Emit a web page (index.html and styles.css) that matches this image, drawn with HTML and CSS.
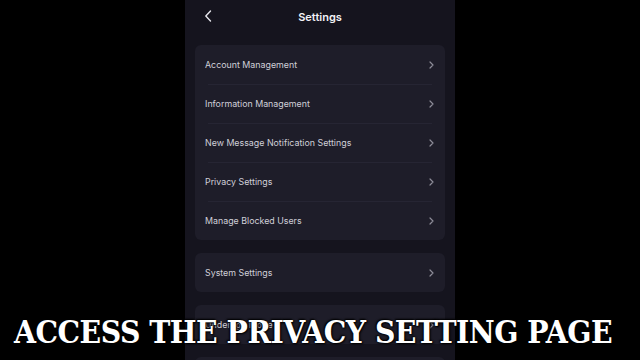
FILE: index.html
```html
<!DOCTYPE html>
<html>
<head>
<meta charset="utf-8">
<link rel="stylesheet" href="styles.css">
</head>
<body>
<div class="stage">
  <div class="phone">
    <div class="header">
      <svg class="back" width="8" height="12" viewBox="0 0 8 12"><path d="M6.5 1 L1.8 6 L6.5 11" fill="none" stroke="#e6e6ec" stroke-width="1.4" stroke-linecap="round" stroke-linejoin="round"/></svg>
      <div class="title">Settings</div>
    </div>
    <div class="card">
      <div class="row"><span>Account Management</span><svg class="chev" width="5" height="8" viewBox="0 0 5 8"><path d="M1 1 L4 4 L1 7" fill="none" stroke="#8d8c98" stroke-width="1.2" stroke-linecap="round" stroke-linejoin="round"/></svg></div>
      <div class="row"><span>Information Management</span><svg class="chev" width="5" height="8" viewBox="0 0 5 8"><path d="M1 1 L4 4 L1 7" fill="none" stroke="#8d8c98" stroke-width="1.2" stroke-linecap="round" stroke-linejoin="round"/></svg></div>
      <div class="row"><span>New Message Notification Settings</span><svg class="chev" width="5" height="8" viewBox="0 0 5 8"><path d="M1 1 L4 4 L1 7" fill="none" stroke="#8d8c98" stroke-width="1.2" stroke-linecap="round" stroke-linejoin="round"/></svg></div>
      <div class="row"><span>Privacy Settings</span><svg class="chev" width="5" height="8" viewBox="0 0 5 8"><path d="M1 1 L4 4 L1 7" fill="none" stroke="#8d8c98" stroke-width="1.2" stroke-linecap="round" stroke-linejoin="round"/></svg></div>
      <div class="row"><span>Manage Blocked Users</span><svg class="chev" width="5" height="8" viewBox="0 0 5 8"><path d="M1 1 L4 4 L1 7" fill="none" stroke="#8d8c98" stroke-width="1.2" stroke-linecap="round" stroke-linejoin="round"/></svg></div>
    </div>
    <div class="card">
      <div class="row"><span>System Settings</span><svg class="chev" width="5" height="8" viewBox="0 0 5 8"><path d="M1 1 L4 4 L1 7" fill="none" stroke="#8d8c98" stroke-width="1.2" stroke-linecap="round" stroke-linejoin="round"/></svg></div>
    </div>
    <div class="card">
      <div class="row"><span>Underage Mode</span><svg class="chev" width="5" height="8" viewBox="0 0 5 8"><path d="M1 1 L4 4 L1 7" fill="none" stroke="#8d8c98" stroke-width="1.2" stroke-linecap="round" stroke-linejoin="round"/></svg></div>
    </div>
    <div class="card">
      <div class="row"></div>
    </div>
  </div>
  <div class="caption">ACCESS THE PRIVACY SETTING PAGE</div>
</div>
</body>
</html>
```
FILE: styles.css
```css
html, body {
  margin: 0;
  padding: 0;
  background: #000;
  width: 640px;
  height: 360px;
  overflow: hidden;
}
.stage {
  position: relative;
  width: 640px;
  height: 360px;
  overflow: hidden;
}
.phone {
  width: 270px;
  height: 360px;
  overflow: hidden;
  margin: 0 auto;
  background: #15141e;
  display: flex;
  flex-direction: column;
  gap: 13px;
  padding: 0 10px;
  box-sizing: border-box;
  font-family: "Inter", "Liberation Sans", sans-serif;
}
.header {
  position: relative;
  height: 32px;
  flex-shrink: 0;
  display: flex;
  align-items: center;
  justify-content: center;
}
.back {
  position: absolute;
  left: 9px;
  top: 10px;
}
.title {
  color: #f2f2f6;
  font-size: 11px;
  font-weight: 600;
  margin-top: 1px;
}
.card {
  background: #1e1d29;
  border-radius: 6px;
  flex-shrink: 0;
}
.row {
  height: 39px;
  display: flex;
  align-items: center;
  justify-content: space-between;
  padding: 0 11px 0 10px;
  position: relative;
  color: #d0cfd8;
  font-size: 8.85px;
}
.row + .row::before {
  content: "";
  position: absolute;
  left: 13px;
  right: 13px;
  top: 0;
  height: 1px;
  background: #262533;
}
.caption {
  position: absolute;
  left: 0;
  right: 14px;
  top: 312px;
  text-align: center;
  color: #fff;
  font-family: "DejaVu Serif", serif;
  font-weight: bold;
  font-stretch: condensed;
  font-size: 31.5px;
  letter-spacing: -0.5px;
  line-height: 40px;
  text-shadow: 0 0 2px #000, 1px 1px 2px #000, -1px -1px 2px #000;
}
```
